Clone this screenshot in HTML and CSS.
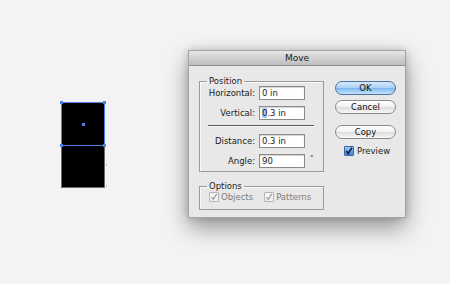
FILE: index.html
```html
<!DOCTYPE html>
<html lang="en">
<head>
<meta charset="UTF-8">
<title>Move</title>
<link rel="stylesheet" href="styles.css">
</head>
<body>
<div class="stage">
    <div class="art">
        <div class="shape selected">
            <i class="pt tl"></i><i class="pt tr"></i><i class="pt bl"></i><i class="pt br"></i><i class="pt mid"></i>
        </div>
        <div class="shape ghost">
            <i class="tick t1"></i><i class="tick t2"></i>
        </div>
    </div>

    <div class="dialog">
        <div class="titlebar">Move</div>
        <div class="dialog-body">
            <div class="left-col">
                <fieldset class="group position">
                    <legend>Position</legend>
                    <div class="row"><label>Horizontal:</label><span class="field">0 in</span></div>
                    <div class="row"><label>Vertical:</label><span class="field"><span class="sel">0</span>.3 in</span></div>
                    <hr class="sep">
                    <div class="row"><label>Distance:</label><span class="field">0.3 in</span></div>
                    <div class="row"><label>Angle:</label><span class="field">90</span><span class="unit">°</span></div>
                </fieldset>

                <fieldset class="group options">
                    <legend>Options</legend>
                    <div class="checks">
                        <span class="check disabled"><span class="box"><svg viewBox="0 0 8 8"><path d="M1.5 4.2 L3.2 6.3 L6.8 0.8" /></svg></span>Objects</span>
                        <span class="check disabled"><span class="box"><svg viewBox="0 0 8 8"><path d="M1.5 4.2 L3.2 6.3 L6.8 0.8" /></svg></span>Patterns</span>
                    </div>
                </fieldset>
            </div>

            <div class="right-col">
                <button class="btn default">OK</button>
                <button class="btn">Cancel</button>
                <button class="btn copy">Copy</button>
                <span class="check preview"><span class="box on"><svg viewBox="0 0 8 8"><path d="M1.3 4 L3.2 6.5 L7 0.6" /></svg></span>Preview</span>
            </div>
        </div>
    </div>
</div>
</body>
</html>
```
FILE: styles.css
```css
/* page */
body {
    margin: 0;
    background-color: #f3f3f3;
    font-family: "DejaVu Sans", Verdana, sans-serif;
    font-size: 8.5px;
    color: #1a1a1a;
}

.stage {
    display: flex;
    width: 450px;
    height: 284px;
    overflow: hidden;
}

/* artboard */
.art {
    position: relative;
    width: 188px;
    flex-shrink: 0;
}

.shape {
    position: absolute;
    left: 62px;
    width: 42px;
    height: 42px;
    background-color: #000;
}

.shape.selected {
    top: 103px;
    box-shadow: 0 0 0 1px #4d7fe6;
    z-index: 1;
}

.shape.ghost {
    top: 145px;
    box-shadow: 0 0 0 1px #6a6a6a;
}

.pt {
    position: absolute;
    width: 3px;
    height: 3px;
    background-color: #4d7fe6;
}

.pt.tl { left: -2px; top: -2px; }
.pt.tr { right: -2px; top: -2px; }
.pt.bl { left: -2px; bottom: -2px; }
.pt.br { right: -2px; bottom: -2px; }
.pt.mid { left: 20px; top: 20px; }

.tick {
    position: absolute;
    right: -3px;
    width: 1px;
    height: 2px;
    background-color: #b8c8f0;
}

.tick.t1 { top: 19px; }
.tick.t2 { bottom: 0; }

/* dialog window */
.dialog {
    width: 218px;
    height: 168px;
    margin-top: 50px;
    box-sizing: border-box;
    background-color: #e8e8e8;
    border: 1px solid #a4a4a4;
    box-shadow: 0 10px 22px rgba(0, 0, 0, 0.38), 0 0 8px rgba(0, 0, 0, 0.18);
}

.titlebar {
    height: 14px;
    line-height: 14px;
    text-align: center;
    font-size: 9px;
    color: #222;
    background: linear-gradient(#e6e6e6, #bdbdbd);
    border-bottom: 1px solid #8e8e8e;
}

.dialog-body {
    display: flex;
    gap: 11px;
    padding: 10px 9px 0 10px;
}

.left-col {
    width: 125px;
}

.group {
    margin: 0;
    padding: 0 0 3px 0;
    border: 1px solid #9a9a9a;
    box-shadow: inset 1px 1px 0 #fafafa;
}

.group legend {
    margin-left: 7px;
    padding: 0 2px;
    line-height: 10px;
    height: 10px;
    color: #1a1a1a;
}

.row {
    display: flex;
    align-items: center;
    height: 14px;
    margin-top: 6px;
}

.row:first-of-type {
    margin-top: 0;
}

.row label {
    width: 55px;
    text-align: right;
    padding-right: 4px;
}

.field {
    width: 46px;
    height: 14px;
    box-sizing: border-box;
    padding-left: 2px;
    line-height: 12px;
    background-color: #fff;
    border: 1px solid #8a8a8a;
    box-shadow: inset 0 1px 1px rgba(0, 0, 0, 0.18);
}

.sel {
    background-color: #a9c8f5;
}

.unit {
    margin-left: 5px;
    align-self: flex-start;
    font-size: 7px;
    color: #444;
}

.sep {
    margin: 5px 9px 0 8px;
    height: 0;
    border: none;
    border-top: 1px solid #5a5a5a;
    border-bottom: 1px solid #fafafa;
}

.sep + .row {
    margin-top: 7px;
}

.options {
    margin-top: 9px;
    padding-bottom: 6px;
}

.checks {
    display: flex;
    gap: 11px;
    padding-left: 9px;
    height: 12px;
    align-items: center;
}

.check {
    display: inline-flex;
    align-items: center;
    gap: 2px;
}

.check.disabled {
    color: #7d7d7d;
}

.box {
    width: 8px;
    height: 8px;
    background-color: #f4f4f4;
    border: 1px solid #b4b4b4;
    border-radius: 1px;
}

.box svg {
    display: block;
    width: 8px;
    height: 8px;
}

.box path {
    fill: none;
    stroke: #a0a0a0;
    stroke-width: 1.3;
}

.box.on {
    background: linear-gradient(#9ec7f4, #3d86dc);
    border-color: #3a64a8;
}

.box.on path {
    stroke: #0b1f45;
    stroke-width: 1.6;
}

/* buttons */
.right-col {
    display: flex;
    flex-direction: column;
    width: 61px;
    padding-top: 5px;
}

.btn {
    width: 61px;
    height: 14px;
    margin: 0 0 5px 0;
    padding: 0;
    font-family: inherit;
    font-size: 8.5px;
    line-height: 12px;
    color: #111;
    border: 1px solid #8b8b8b;
    border-radius: 7px;
    background: linear-gradient(#ffffff, #f1f1f1 50%, #dcdcdc 51%, #f7f7f7);
}

.btn.default {
    border-color: #4f6f9c;
    background: linear-gradient(#d8ebfb, #a8d0f4 50%, #7ab7ee 51%, #c3e5fd);
}

.btn.copy {
    margin-top: 6px;
}

.check.preview {
    margin-top: 2px;
    padding-left: 9px;
    gap: 3px;
}
```
